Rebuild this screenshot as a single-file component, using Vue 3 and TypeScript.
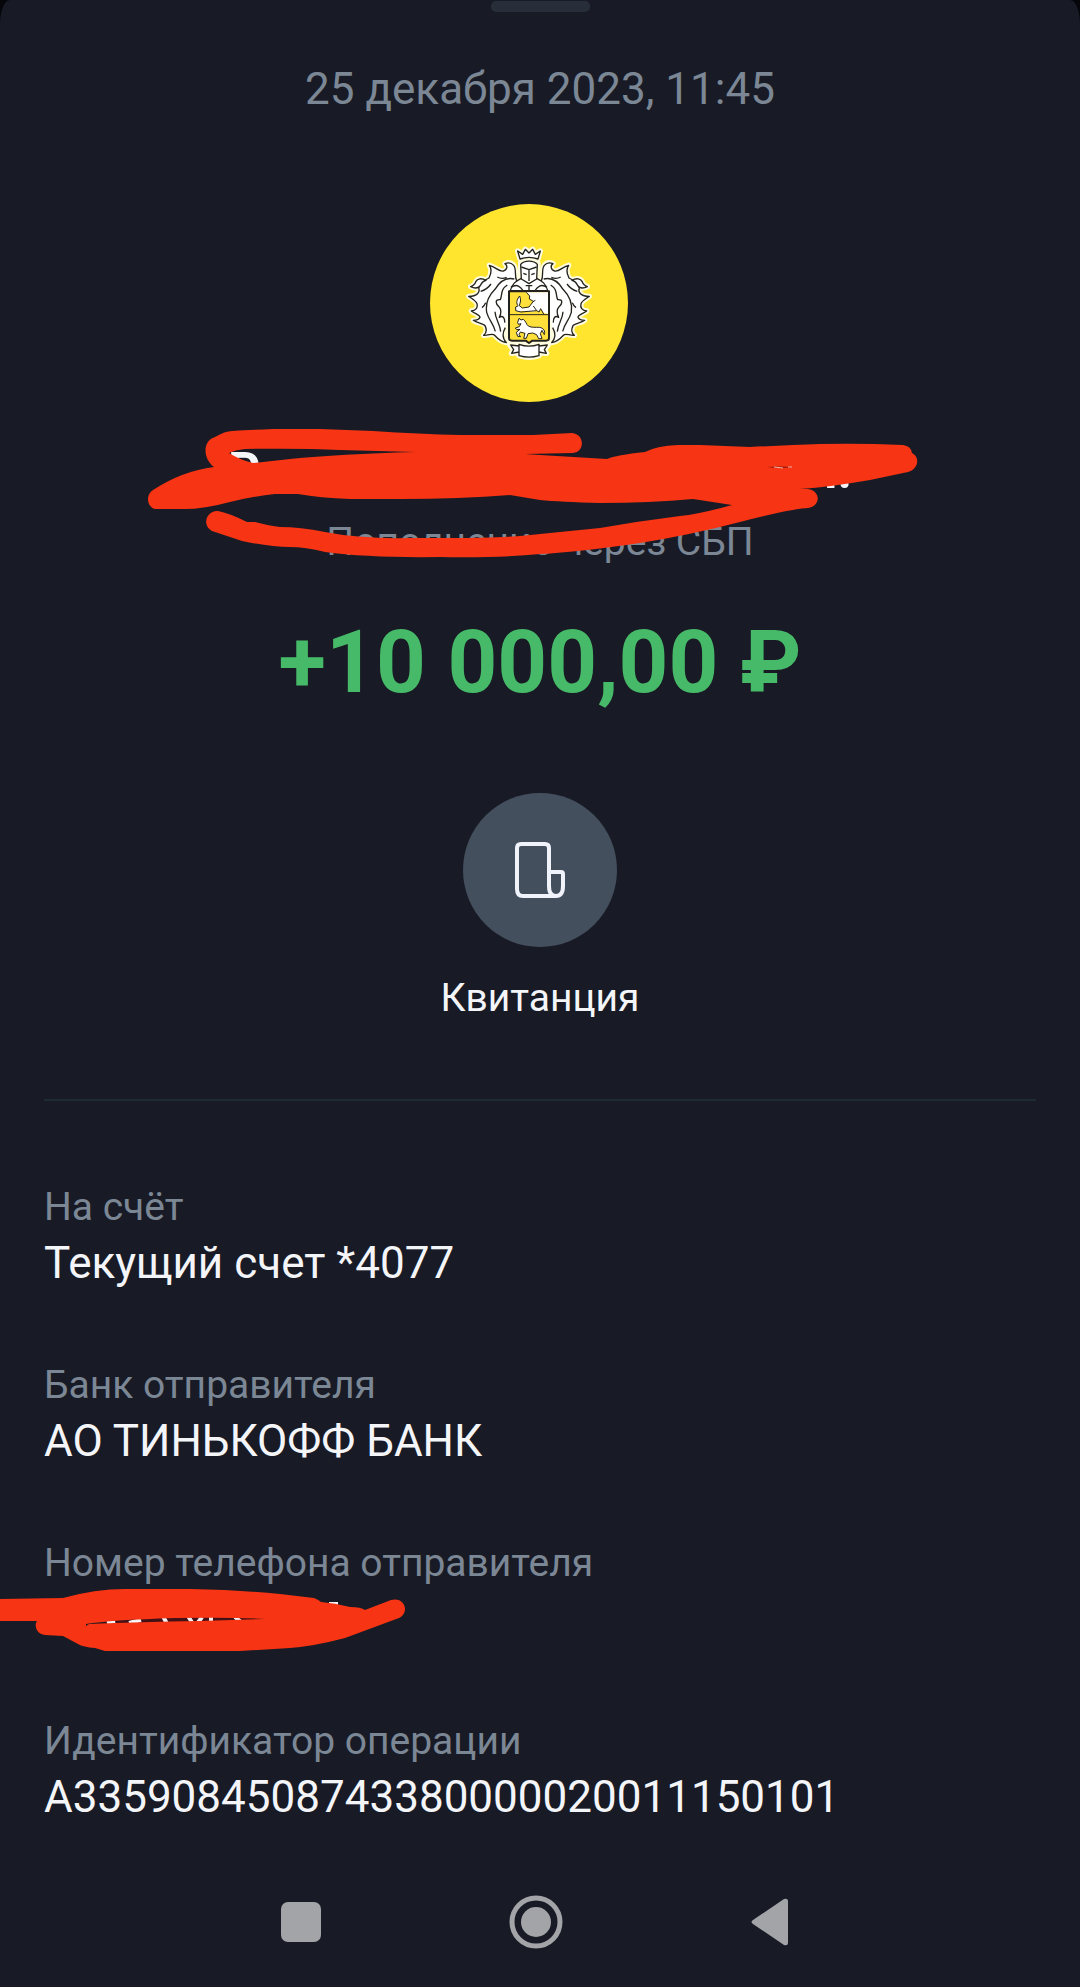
<script setup lang="ts">
interface Detail {
  label: string
  value: string
  hidden?: boolean
}

const details: Detail[] = [
  { label: 'На счёт', value: 'Текущий счет *4077' },
  { label: 'Банк отправителя', value: 'АО ТИНЬКОФФ БАНК' },
  { label: 'Номер телефона отправителя', value: '', hidden: true },
  { label: 'Идентификатор операции', value: 'A3359084508743380000020011150101' },
]
</script>

<template>
  <main class="sheet">
    <div class="handle"></div>
    <time class="date" datetime="2023-12-25T11:45">25 декабря 2023, 11:45</time>

    <svg class="avatar" viewBox="30 27 594 594" role="img" aria-label="Тинькофф">
      <defs>
        <g id="mantle">
          <path d="M290 258 C282 240 291 224 281 211 C274 203 264 202 255 206 C264 212 262 225 250 228 C236 231 229 216 208 211 C216 222 212 239 207 249 C190 257 180 266 176 279 C181 291 172 304 146 304 C158 312 168 318 171 326 C174 338 168 346 154 348 C167 357 181 360 180 367 C178 373 170 376 160 376 C172 385 190 384 195 392 C201 404 200 414 191 421 C205 422 217 414 223 420 C232 430 240 440 259 443 C246 429 248 412 256 398" />
          <path d="M152 275 C166 282 177 279 183 268 C186 261 192 257 198 256 C184 248 172 251 168 259 C165 267 161 273 152 275 Z" />
          <path d="M283 252 C259 246 240 258 225 283 C208 300 196 326 200 352 C207 377 220 384 226 409 M232 246 C242 252 253 250 260 247 M213 267 C203 281 193 286 182 289 M186 338 C191 335 194 330 197 323 M225 350 C226 374 240 384 242 410 M262 270 C240 284 248 299 241 314 C223 312 227 328 238 337 C244 343 244 357 238 367 C249 360 255 370 254 383" fill="none" />
        </g>
      </defs>
      <circle cx="327" cy="324" r="297" fill="#ffe52d" />
      <g class="halo">
        <use href="#mantle" />
        <use href="#mantle" transform="matrix(-1 0 0 1 654 0)" />
        <path d="M300 192 L293 168 L308 176 L316 163 L327 172 L338 163 L346 176 L361 168 L354 192 Z M302 204 H354 V250 L387 287 V434 L327 444 L267 434 V287 L302 250 Z" />
        <path d="M256 262 L290 250 L364 250 L398 262 V398 L387 440 H267 L256 398 Z" />
        <path d="M270 451 L297 453 V448 Q327 459 357 448 V453 L384 451 L373 465 L380 475 L357 473 V482 Q327 492 297 482 V473 L274 475 L281 465 Z" />
      </g>
      <g class="ink">
        <use href="#mantle" />
        <use href="#mantle" transform="matrix(-1 0 0 1 654 0)" />
        <path d="M300 192 L293 168 L308 178 L316 163 L327 174 L338 163 L346 178 L361 168 L354 192 Q327 182 300 192 Z" />
        <path d="M304 250 C288 258 276 266 271 287 H383 C378 266 366 258 350 250 Z" />
        <path d="M302 208 C312 195 342 195 352 208 L350 252 L327 266 L304 252 Z" />
        <path d="M273 277 C291 265 302 275 310 288 M381 277 C363 265 352 275 344 288" fill="none" />
        <path d="M304 216 L327 224 V258 M350 216 L327 224 M310 235 L320 239 M344 235 L334 239 M317 272 H337 M327 272 V286" />
        <path d="M267 289 H387 V430 Q387 437 378 437 H337 L327 444 L317 437 H276 Q267 437 267 430 Z" fill="#ffe03a" stroke-width="6" />
        <path d="M319 292 H384 V357 L371 354 L362 341 L357 350 L350 346 L340 350 L305 348 L297 352 L286 346 L288 334 L298 333 L307 340 L327 337 L340 319 L329 312 L328 302 Z" stroke="none" />
        <path d="M319 292 L329 303 L328 312 L340 319 L327 336 L307 339 L297 331 L287 336 L287 347 L303 351 L350 347 L357 351 L362 341 L371 357 M346 316 L339 320 M350 347 L340 333" stroke-width="3" fill="none" />
        <path d="M293 332 C287 319 293 311 299 303 C304 315 301 321 298 332" stroke-width="3" />
        <path d="M267 359 H387" stroke-width="3" />
        <path d="M297 370 L303 375 L310 373 C318 378 318 388 325 393 C335 399 348 396 358 397 C372 399 376 409 373 419 L366 406 L361 416 L366 431 H356 L350 419 L338 414 L324 416 L319 430 H311 L315 415 L301 411 L297 419 L302 425 L293 424 L289 412 L300 403 L290 404 L286 399 L298 395 L303 386 L295 388 L293 382 Z" stroke-width="3" />
        <path d="M297 453 L272 450 L281 464 L275 475 L297 471 M357 453 L382 450 L373 464 L379 475 L357 471 M297 448 Q327 459 357 448 V482 Q327 491 297 482 Z" />
      </g>
    </svg>

    <section class="sender">
      <h1 class="name"><span>Р</span><span>Н.</span></h1>
      <p class="kind">Пополнение через СБП</p>
      <svg class="stroke-top" viewBox="140 420 800 150" aria-hidden="true">
        <path
          fill="#f73413"
          fill-rule="evenodd"
          d="M232 431 Q250 430 273 429 L320 429 L373 431 Q420 434 460 435 L533 435 L572 433 C585 434 585 452 573 453 L525 454 L540 455 L607 459 Q616 455 645 452 Q656 446 678 445 L700 445 L750 447 Q790 445 820 444 Q860 443 903 445 Q911 446 912 453 C920 457 919 469 908 472 L870 480 Q830 487 800 489 L808 489 C821 491 821 506 808 508 Q795 508 740 522 Q690 535 640 543 Q580 552 540 554 Q500 558 440 557 Q370 558 325 552 Q305 547 290 547 Q270 547 242 541 L212 531 C201 525 207 510 218 511 Q229 513 247 522 L255 522 Q270 526 280 527 Q300 527 325 532 Q360 539 410 538 L450 538 Q510 538 540 534 L600 528 Q640 521 680 516 Q700 514 732 505 L693 499 Q650 503 600 503 Q560 502 540 500 L510 495 Q460 499 400 499 L350 499 Q320 498 298 494 L275 494 Q255 496 230 502 Q200 510 180 509 L155 509 C146 506 146 494 153 490 Q182 471 214 467 C203 459 202 441 215 437 Q225 431 232 431 Z M229 453 Q235 450 245 449 Q300 448 340 450 L415 452 Q340 454 290 459 L253 463 Q240 460 229 453 Z"
        />
        <path d="M767 467 Q780 466 793 467 Q780 469 767 467" fill="#8c1708" />
        <path d="M774 467 L783 468 M788 467 L792 467" stroke="#f5b4ac" stroke-width="1" />
      </svg>
    </section>

    <p class="amount">+10 000,00 ₽</p>

    <button class="receipt" type="button">
      <span class="receipt-icon">
        <svg viewBox="0 0 154 154" fill="none" stroke="#f1f3fb" stroke-width="4" stroke-linejoin="round" aria-hidden="true">
          <path d="M94 103 H60 Q54 103 54 96 V55 Q54 51 58 51 H82 Q86 51 86 55 V93 Q86 103 93 103 Q100 103 100 93 V81 Q100 79 98 79 H86" />
        </svg>
      </span>
      <span>Квитанция</span>
    </button>

    <hr class="rule" />

    <dl class="details">
      <div v-for="item in details" :key="item.label" class="detail">
        <dt>{{ item.label }}</dt>
        <dd>
          {{ item.value }}
          <svg v-if="item.hidden" class="stroke-phone" viewBox="0 1580 420 80" aria-hidden="true">
            <path d="M329 1604 H336 V1608" stroke="#f4f5f9" stroke-width="4" fill="none" />
            <path d="M86 1625 Q170 1613 265 1619 Q170 1626 86 1625" fill="#431016" />
            <path d="M107 1623 L115 1621 M129 1623 L141 1620 M163 1616 L167 1624 M188 1616 L193 1624 M202 1617 L197 1624 M211 1616 V1624 M235 1617 L241 1622" stroke="#f4f5f9" stroke-width="4" />
            <path
              fill="#f73413"
              fill-rule="evenodd"
              d="M0 1599 L63 1598 Q95 1589 125 1589 L190 1589 Q240 1590 280 1594 L314 1598 Q319 1600 321 1602 Q335 1603 350 1607 Q361 1607 365 1610 L391 1600 C405 1596 410 1613 399 1618 L345 1638 Q315 1646 290 1648 L240 1651 H105 L95 1648 Q83 1647 78 1644 L63 1636 L45 1635 C36 1634 34 1625 37 1621 H0 Z M86 1626 L89 1624 Q140 1622 200 1621 L265 1619 Q235 1617 175 1618 Q110 1620 86 1624 Z"
            />
          </svg>
        </dd>
      </div>
    </dl>

    <nav class="system" aria-label="Навигация">
      <button type="button" aria-label="Недавние">
        <svg width="40" height="54" viewBox="0 0 40 54"><rect y="7" width="40" height="40" rx="7" /></svg>
      </button>
      <button type="button" aria-label="Домой">
        <svg width="54" height="54" viewBox="0 0 54 54">
          <circle cx="27" cy="27" r="24" fill="none" stroke="#a3a4a8" stroke-width="5" />
          <circle cx="27" cy="27" r="15" />
        </svg>
      </button>
      <button type="button" aria-label="Назад">
        <svg width="37" height="54" viewBox="0 0 37 54">
          <path d="M2 25 L33 4 Q37 3 37 6 V48 Q37 51 33 50 L2 29 Q-1 27 2 25 Z" />
        </svg>
      </button>
    </nav>
  </main>
</template>

<style>
body {
  margin: 0;
  background: #04060a;
}
</style>

<style scoped>
.sheet {
  box-sizing: border-box;
  display: flex;
  flex-direction: column;
  align-items: center;
  min-height: 100vh;
  padding: 1px 0 38px;
  overflow: hidden;
  background: #181b25;
  border-radius: 10px 10px 0 0 / 24px 24px 0 0;
  color: #f4f5f9;
  font-family: Roboto, 'Noto Sans', sans-serif;
}

.handle {
  width: 99px;
  height: 11px;
  border-radius: 5px;
  background: #272e3a;
}

.date {
  margin-top: 49px;
  font-size: 44px;
  line-height: 56px;
  color: #7c8795;
}

.avatar {
  width: 198px;
  height: 198px;
  margin: 87px 22px 0 0;
}

.halo {
  fill: #fffce0;
  stroke: #fffce0;
  stroke-width: 16;
  stroke-linejoin: round;
}

.ink {
  fill: #ffffff;
  stroke: #24221c;
  stroke-width: 4;
  stroke-linejoin: round;
}

.sender {
  position: relative;
  display: flex;
  flex-direction: column;
  align-items: center;
  width: 100%;
  margin-top: 41px;
}

.name {
  display: flex;
  justify-content: space-between;
  width: 624px;
  margin: 0;
  font-size: 50px;
  line-height: 56px;
  font-weight: 700;
}

.kind {
  margin: 19px 0 0;
  font-size: 39px;
  line-height: 48px;
  color: #7c8795;
}

.stroke-top {
  position: absolute;
  top: -23px;
  left: calc(50% - 400px);
  width: 800px;
  height: 150px;
}

.amount {
  margin: 44px 0 0;
  font-size: 87px;
  line-height: 104px;
  font-weight: 700;
  color: #46ba68;
}

.receipt {
  display: flex;
  flex-direction: column;
  align-items: center;
  gap: 27px;
  margin: 79px 0 0;
  padding: 0;
  border: 0;
  background: none;
  color: inherit;
  font-family: inherit;
  font-size: 39px;
  line-height: 48px;
}

.receipt-icon {
  width: 154px;
  height: 154px;
  border-radius: 50%;
  background: #444f5e;
}

.receipt-icon svg {
  display: block;
}

.rule {
  align-self: stretch;
  height: 2px;
  margin: 77px 44px 0;
  border: 0;
  background: #1f2b34;
}

.details {
  display: flex;
  flex-direction: column;
  align-self: stretch;
  gap: 66px;
  margin: 82px 0 0;
}

.detail {
  padding: 0 44px;
}

.detail dt {
  font-size: 39px;
  line-height: 48px;
  color: #7c8795;
}

.detail dd {
  position: relative;
  min-height: 64px;
  margin: 0;
  font-size: 44px;
  line-height: 64px;
  overflow-wrap: anywhere;
}

.stroke-phone {
  position: absolute;
  top: -7px;
  left: -44px;
  width: 420px;
  height: 80px;
}

.details + .system {
  margin-top: auto;
}

.system {
  display: flex;
  justify-content: center;
  gap: 188px;
  padding: 66px 11px 0 0;
}

.system button {
  padding: 0;
  border: 0;
  background: none;
}

.system svg {
  display: block;
  fill: #a3a4a8;
}
</style>
